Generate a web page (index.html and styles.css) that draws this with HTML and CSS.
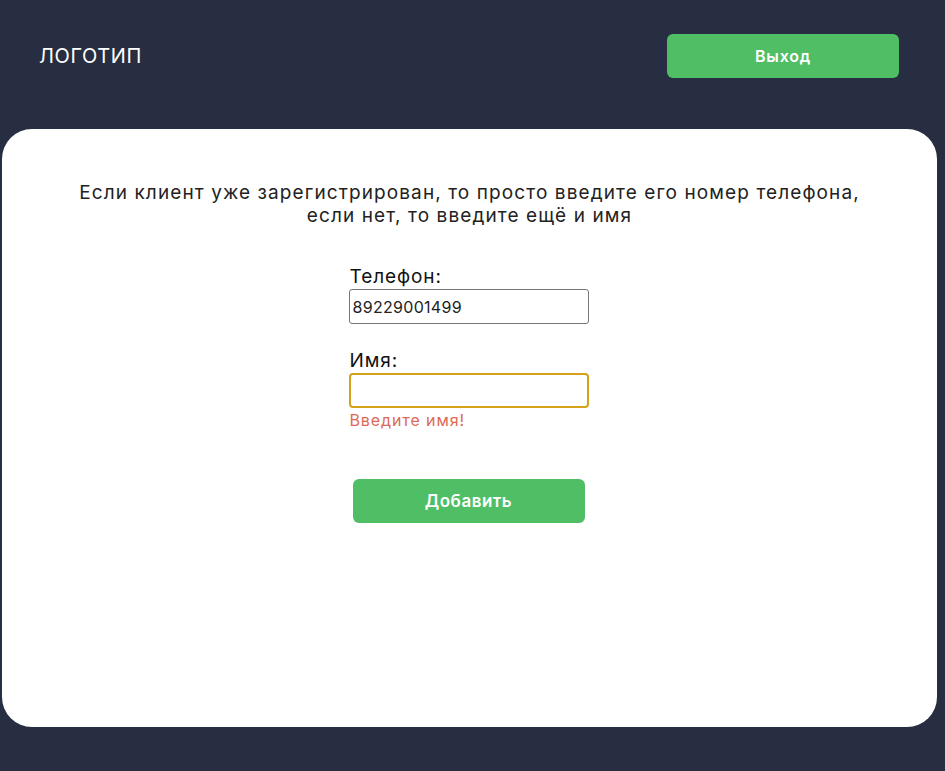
FILE: index.html
```html
<!DOCTYPE html>
<html lang="ru">
<head>
<meta charset="utf-8">
<title>Клиент</title>
<link rel="stylesheet" href="styles.css">
</head>
<body>
<header class="header">
  <div class="logo">ЛОГОТИП</div>
  <button class="btn btn-exit">Выход</button>
</header>
<main class="card">
  <p class="intro">Если клиент уже зарегистрирован, то просто введите его номер телефона,<br>если нет, то введите ещё и имя</p>
  <form class="form">
    <label class="field">
      <span class="label">Телефон:</span>
      <input class="input" type="text" value="89229001499">
    </label>
    <label class="field field-name">
      <span class="label">Имя:</span>
      <input class="input input-error" type="text" value="">
      <span class="error">Введите имя!</span>
    </label>
    <button type="button" class="btn btn-add">Добавить</button>
  </form>
</main>
</body>
</html>
```
FILE: styles.css
```css
* { box-sizing: border-box; }
html, body { margin: 0; padding: 0; }
body {
  background: #272e41;
  font-family: "Inter", "Noto Sans", sans-serif;
  color: #1e1e1e;
  height: 771px;
  overflow: hidden;
}
.header {
  display: flex;
  justify-content: space-between;
  align-items: center;
  padding: 34px 46px 51px 39px;
}
.logo {
  color: #ffffff;
  font-size: 20px;
  letter-spacing: 0.6px;
}
.btn {
  border: none;
  background: #4fbe64;
  color: #ffffff;
  font-family: inherit;
  font-weight: 600;
  border-radius: 6px;
  height: 44px;
  width: 232px;
  cursor: pointer;
}
.btn-exit { font-size: 16px; letter-spacing: 0.8px; }
.card {
  background: #ffffff;
  margin-left: 2px;
  width: 935px;
  height: 598px;
  border-radius: 30px;
  padding-top: 52px;
  display: flex;
  flex-direction: column;
  align-items: center;
}
.intro {
  margin: 0;
  text-align: center;
  font-size: 19px;
  line-height: 23px;
  letter-spacing: 1.1px;
  color: #222;
}
.form {
  margin-top: 38px;
  margin-left: -2px;
  width: 240px;
  display: flex;
  flex-direction: column;
}
.field {
  display: flex;
  flex-direction: column;
}
.label {
  font-size: 19px;
  line-height: 24px;
  letter-spacing: 0.9px;
  padding-left: 1px;
  color: #111;
}
.input {
  width: 240px;
  height: 35px;
  border: 1px solid #767676;
  border-radius: 3px;
  font-family: inherit;
  font-size: 16px;
  letter-spacing: 0.3px;
  padding: 0 3px;
  color: #222;
  outline: none;
}
.field-name { margin-top: 25px; }
.input-error {
  border: 2px solid #d3a21a;
  border-radius: 4px;
}
.error {
  color: #dc6a55;
  font-size: 16px;
  line-height: 20px;
  letter-spacing: 0.9px;
  margin-top: 2px;
  padding-left: 1px;
}
.btn-add {
  margin-top: 49px;
  margin-left: 4px;
  font-size: 17px;
  letter-spacing: 0.5px;
}
```
